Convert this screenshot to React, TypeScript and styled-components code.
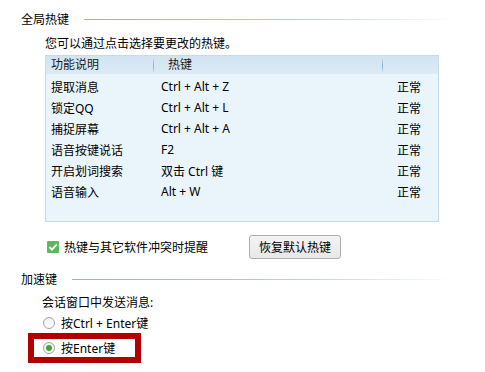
import styled, { createGlobalStyle } from 'styled-components'

const GlobalStyle = createGlobalStyle`
  body {
    margin: 0;
    background: #ffffff;
    font-family: "Noto Sans", "Noto Sans CJK SC", sans-serif;
    font-size: 12px;
    color: #000000;
  }
`

type Hotkey = { name: string; keys: string; status: string }

const hotkeys: Hotkey[] = [
  { name: '提取消息', keys: 'Ctrl + Alt + Z', status: '正常' },
  { name: '锁定QQ', keys: 'Ctrl + Alt + L', status: '正常' },
  { name: '捕捉屏幕', keys: 'Ctrl + Alt + A', status: '正常' },
  { name: '语音按键说话', keys: 'F2', status: '正常' },
  { name: '开启划词搜索', keys: '双击 Ctrl 键', status: '正常' },
  { name: '语音输入', keys: 'Alt + W', status: '正常' },
]

const CheckIcon = () => (
  <svg width='12' height='12' viewBox='0 0 12 12'>
    <rect x='0' y='0' width='12' height='12' rx='1' fill='#5cb85c' />
    <path d='M2.4 6.2 L4.9 8.7 L9.8 3.4' fill='none' stroke='#ffffff' strokeWidth='1.8' />
  </svg>
)

const App = () => {
  return (
    <Page>
      <GlobalStyle />
      <SectionHeader>
        <span>全局热键</span>
        <Rule />
      </SectionHeader>
      <Hint>您可以通过点击选择要更改的热键。</Hint>
      <Table>
        <HeadRow>
          <HeadCell $pad={5} $divider>功能说明</HeadCell>
          <HeadCell $pad={14} $divider>热键</HeadCell>
          <HeadCell $pad={14} />
        </HeadRow>
        {hotkeys.map((h) => (
          <Row key={h.name}>
            <Cell $pad={5}>{h.name}</Cell>
            <Cell $pad={7}>{h.keys}</Cell>
            <Cell $pad={14}>{h.status}</Cell>
          </Row>
        ))}
      </Table>
      <OptionRow>
        <CheckLabel>
          <CheckIcon />
          <span>热键与其它软件冲突时提醒</span>
        </CheckLabel>
        <Button>恢复默认热键</Button>
      </OptionRow>
      <SectionHeader $top={13}>
        <span>加速键</span>
        <Rule />
      </SectionHeader>
      <SubTitle>会话窗口中发送消息:</SubTitle>
      <RadioRow>
        <Radio />
        <span>按Ctrl + Enter键</span>
      </RadioRow>
      <Highlight>
        <RadioRow $flush>
          <Radio $checked />
          <span>按Enter键</span>
        </RadioRow>
      </Highlight>
    </Page>
  )
}

export default App

const Page = styled.div`
  width: 485px;
  height: 372px;
  box-sizing: border-box;
  padding: 12px 30px 0 21px;
  overflow: hidden;
`

const SectionHeader = styled.div<{ $top?: number }>`
  display: flex;
  align-items: center;
  gap: 15px;
  height: 16px;
  line-height: 16px;
  margin-top: ${({ $top }) => $top ?? 0}px;
`

const Rule = styled.div`
  flex: 1;
  height: 1px;
  margin-top: -1px;
  background: linear-gradient(to right, #8db4d2 0%, #b8d0e3 60%, rgba(255, 255, 255, 0) 100%);
`

const Hint = styled.div`
  margin: 8px 0 0 24px;
  height: 16px;
  line-height: 16px;
`

const Table = styled.div`
  margin: 3px 0 0 24px;
  width: 394px;
  height: 167px;
  box-sizing: border-box;
  border: 1px solid #c6dbea;
  background: #eaf5fb;
`

const HeadRow = styled.div`
  display: grid;
  grid-template-columns: 108px 229px 1fr;
  height: 18px;
  margin-bottom: 2px;
  background: linear-gradient(to bottom, #d2e4f1, #dbeaf5);
`

const HeadCell = styled.div<{ $pad: number; $divider?: boolean }>`
  position: relative;
  padding-left: ${({ $pad }) => $pad}px;
  line-height: 18px;
  color: #1a1a1a;

  &::after {
    content: '';
    display: ${({ $divider }) => ($divider ? 'block' : 'none')};
    position: absolute;
    right: 0;
    top: 3px;
    width: 1px;
    height: 13px;
    background: linear-gradient(to bottom, rgba(130, 175, 210, 0.2), #7fb0d6, rgba(130, 175, 210, 0.2));
  }
`

const Row = styled.div`
  display: grid;
  grid-template-columns: 108px 229px 1fr;
  height: 21px;
  align-items: center;
`

const Cell = styled.div<{ $pad: number }>`
  padding-left: ${({ $pad }) => $pad}px;
  white-space: nowrap;
`

const OptionRow = styled.div`
  display: flex;
  align-items: center;
  margin: 13px 0 0 26px;
  height: 24px;
`

const CheckLabel = styled.label`
  display: flex;
  align-items: center;
  gap: 5px;
  width: 202px;
`

const Button = styled.button`
  width: 92px;
  height: 24px;
  padding: 0;
  border: 1px solid #adadad;
  border-radius: 3px;
  background: linear-gradient(to bottom, #f4f4f4, #e8e8e8);
  font-family: inherit;
  font-size: 12px;
  color: #000000;
`

const SubTitle = styled.div`
  margin: 7px 0 0 21px;
  height: 16px;
  line-height: 16px;
`

const RadioRow = styled.div<{ $flush?: boolean }>`
  display: flex;
  align-items: center;
  gap: 6px;
  height: 16px;
  margin: ${({ $flush }) => ($flush ? '0' : '4px 0 0 22px')};
`

const Radio = styled.span<{ $checked?: boolean }>`
  position: relative;
  width: 12px;
  height: 12px;
  box-sizing: border-box;
  border-radius: 50%;
  border: 1px solid #a3a3a3;
  background: linear-gradient(to bottom, #f0f0f0, #ffffff);

  &::after {
    content: '';
    display: ${({ $checked }) => ($checked ? 'block' : 'none')};
    position: absolute;
    left: 2px;
    top: 2px;
    width: 6px;
    height: 6px;
    border-radius: 50%;
    background: #3fa535;
  }
`

const Highlight = styled.div`
  display: flex;
  align-items: center;
  margin: 2px 0 0 7px;
  width: 113px;
  height: 30px;
  box-sizing: border-box;
  border: 6px solid #b20000;
  padding-left: 9px;
`
